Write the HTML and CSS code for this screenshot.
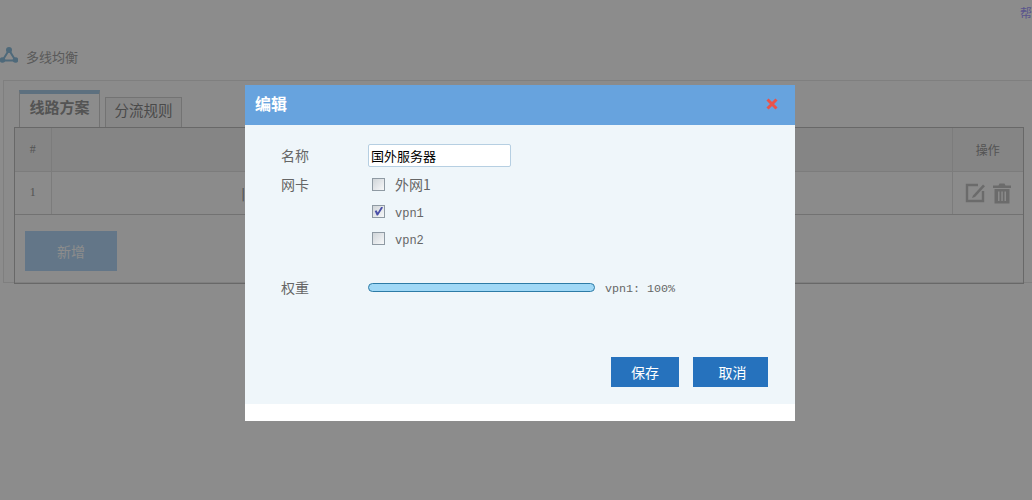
FILE: index.html
```html
<!DOCTYPE html>
<html lang="zh">
<head>
<meta charset="utf-8">
<title>多线均衡</title>
<link rel="stylesheet" href="styles.css">
</head>
<body>
<div class="page">
  <div class="topbar"><a class="help">帮助</a></div>
  <div class="crumb">
    <svg class="crumb-icon" width="18" height="18" viewBox="0 0 18 18"><path d="M9 4 2.500 14.500H15.500Z" fill="none" stroke="#8fc0df" stroke-width="2"/><circle cx="9" cy="4" r="3" fill="#8fc0df"/><circle cx="2.500" cy="14" r="2.800" fill="#8fc0df"/><circle cx="15.500" cy="14" r="2.800" fill="#8fc0df"/></svg>
    <span>多线均衡</span>
  </div>
  <div class="panel">
    <div class="tabs">
      <div class="tab active">线路方案</div>
      <div class="tab">分流规则</div>
    </div>
    <div class="table-box">
      <table class="grid">
        <tr class="head"><th class="c-num">#</th><th></th><th class="c-op">操作</th></tr>
        <tr class="row">
          <td class="c-num">1</td>
          <td class="c-name">|</td>
          <td class="c-op">
            <div class="ops">
              <svg width="21" height="21" viewBox="0 0 21 21"><path d="M13 3H2v16h16V9" fill="none" stroke="#c4c4c4" stroke-width="2.400"/><path d="M8 13.500 18 2.500l2 1.800L10 15l-3 1z" fill="#c4c4c4"/></svg>
              <svg width="18" height="22" viewBox="0 0 18 22"><path d="M6.500 1.500h5l1 2H18v2.500H0V3.500h5.500z" fill="#c4c4c4"/><path d="M1.500 7h15v14.500h-15zM5 9.500v9.500h1.500V9.500zM8.300 9.500v9.500h1.500V9.500zM11.500 9.500v9.500H13V9.500z" fill="#c4c4c4" fill-rule="evenodd"/></svg>
            </div>
          </td>
        </tr>
      </table>
      <div class="table-foot"><button class="btn add">新增</button></div>
    </div>
  </div>
</div>
<div class="overlay"></div>
<div class="modal">
  <div class="modal-head">
    <span class="modal-title">编辑</span>
    <svg class="modal-close" width="12" height="12" viewBox="0 0 12 12"><path d="M1.500 1.500 10.500 10.500M10.500 1.500 1.500 10.500" stroke="#e9534a" stroke-width="3"/></svg>
  </div>
  <div class="modal-body">
    <div class="form">
      <div class="label name-label">名称</div>
      <div><input class="text-input" type="text" value="国外服务器"></div>
      <div class="label card-label">网卡</div>
      <div class="checks">
        <label class="check"><input type="checkbox"><span class="cn">外网1</span></label>
        <label class="check"><input type="checkbox" checked><span>vpn1</span></label>
        <label class="check"><input type="checkbox"><span>vpn2</span></label>
      </div>
      <div class="label weight-label">权重</div>
      <div class="weight">
        <div class="bar"></div>
        <span class="weight-text">vpn1: 100%</span>
      </div>
    </div>
    <div class="actions">
      <button class="btn save">保存</button>
      <button class="btn cancel">取消</button>
    </div>
  </div>
  <div class="modal-foot"></div>
</div>
</body>
</html>
```
FILE: styles.css
```css
* { box-sizing: border-box; }
html, body { margin: 0; height: 500px; overflow: hidden; }
body { font-family: "Noto Sans CJK SC", "Liberation Sans", sans-serif; font-size: 14px; color: #888; background: #fff; }
.page { width: 1032px; height: 500px; overflow: hidden; }
.topbar { height: 46px; padding: 4px 0 0 1020px; white-space: nowrap; overflow: hidden; font-size: 12px; line-height: 18px; }
.help { color: #a49bff; }
.crumb { height: 34px; display: flex; align-items: flex-start; gap: 8px; font-size: 13px; line-height: 22px; color: #a4a4a4; }
.crumb-icon { flex: none; }
.panel { margin-left: 3px; height: 203px; padding: 9px 8px 0 10px; border: 1px solid #e8e8e8; border-right: 0; background: #fdfdfd; }
.tabs { display: flex; align-items: flex-end; gap: 5px; height: 37px; padding-left: 5px; }
.tab { width: 77px; height: 30px; border: 1px solid #d2d2d2; border-bottom: 0; text-align: center; font-size: 14.500px; line-height: 23px; color: #888; background: #f6f6f6; }
.tab.active { width: 81px; height: 37px; border-top: 4px solid #a9cde8; font-weight: 700; font-size: 15px; line-height: 25px; background: #fff; color: #999; }
.table-box { width: 1010px; height: 157px; border: 1px solid #bdbdbd; }
.grid { width: 100%; border-collapse: collapse; table-layout: fixed; font-size: 12px; }
.grid th, .grid td { border: 1px solid #e2e2e2; padding: 0; text-align: center; font-weight: 400; }
.grid tr > :first-child { border-left: 0; }
.grid tr > :last-child { border-right: 0; }
.grid .head > * { border-top: 0; }
.head { height: 43px; background: #f2f2f2; }
.row { height: 43px; background: #fdfdfd; }
.row > * { border-bottom-color: #cfcfcf !important; }
.c-num { width: 36px; font-family: "Liberation Serif", serif; color: #999; }
.grid .c-name { text-align: left; padding-left: 190px; color: #777; }
.c-op { width: 71px; color: #999; }
.ops { display: flex; justify-content: center; align-items: center; gap: 7px; }
.table-foot { padding: 16px 0 0 10px; }
.btn { display: block; border: 0; padding: 0; height: 30px; color: #fff; font: 14px/30px "Noto Sans CJK SC", sans-serif; background: #2672bd; }
.add { width: 92px; height: 40px; line-height: 40px; background: #b4d8f8; }
.overlay { position: absolute; inset: 0; background: rgba(0, 0, 0, .45); }
.modal { position: absolute; left: 245px; top: 85px; width: 550px; height: 336px; display: flex; flex-direction: column; background: #fff; }
.modal-head { flex: none; height: 40px; padding: 0 17px 0 10px; display: flex; align-items: center; justify-content: space-between; background: #67a3de; }
.modal-title { color: #fff; font-size: 16px; font-weight: 700; margin-bottom: 5px; }
.modal-close { margin-bottom: 2px; }
.modal-body { flex: none; height: 279px; padding: 19px 27px 0 36px; background: #eff6fa; display: flex; flex-direction: column; }
.form { display: grid; grid-template-columns: 87px 1fr; align-items: start; }
.label { font-size: 14px; line-height: 22px; color: #666; }
.name-label { height: 24px; }
.card-label { margin-top: 5px; }
.text-input { display: block; width: 143px; height: 23px; padding: 0 2px; border: 1px solid #b6cfe2; border-radius: 2px; background: #fff; color: #000; font: 13px/21px "Noto Sans CJK SC", sans-serif; outline: 0; }
.checks { display: flex; flex-direction: column; padding-top: 4px; }
.check { display: flex; align-items: center; gap: 10px; height: 27px; font: 12px/20px "Liberation Mono", monospace; color: #666; }
.check span { margin-top: 2px; }
.check .cn { margin-top: -4px; font: 14px/20px "Noto Sans CJK SC", sans-serif; }
.check input { appearance: none; position: relative; width: 13px; height: 13px; margin: 0 0 3px 4px; border: 1px solid #8f9aa3; background: linear-gradient(135deg, #d0d5d9, #f7f8f9); }
.check input:checked::after { content: ""; position: absolute; inset: 1px; background: #4a4fa8; clip-path: polygon(8% 50%, 28% 42%, 42% 66%, 82% 0, 100% 10%, 44% 100%, 30% 100%); }
.weight-label { margin-top: 23px; }
.weight { margin-top: 22px; display: flex; align-items: center; gap: 10px; height: 24px; }
.bar { width: 227px; height: 9px; border: 1px solid #2d7ba6; border-radius: 5px; background: #a0d8f6; }
.weight-text { margin-top: 3px; font: 11.700px/22px "Liberation Mono", monospace; color: #666; }
.actions { margin-top: 58px; display: flex; justify-content: flex-end; gap: 14px; }
.save { width: 68px; }
.cancel { width: 75px; padding-left: 4px; }
.modal-foot { flex: 1; background: #fff; }
```
